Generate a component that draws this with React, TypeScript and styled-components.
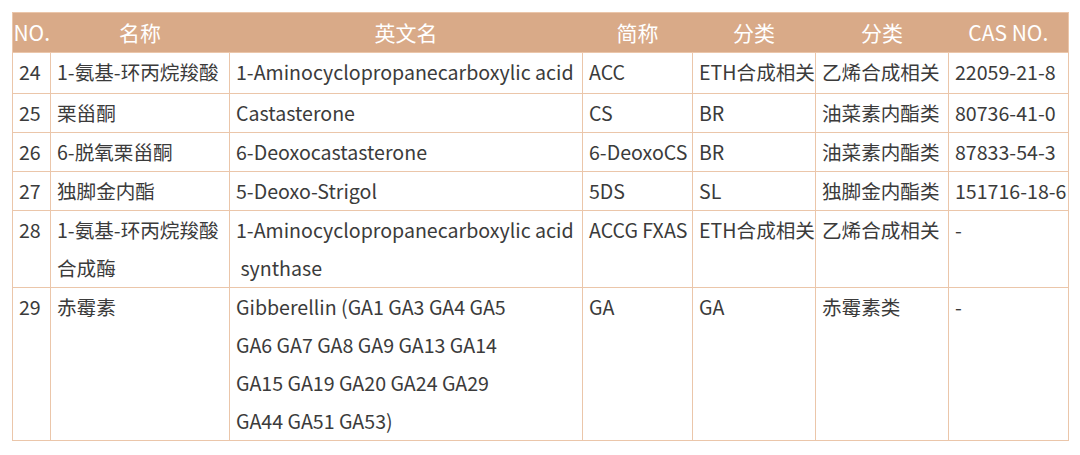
import React from 'react'
import styled, { createGlobalStyle } from 'styled-components'

const GlobalStyle = createGlobalStyle`
  html, body {
    margin: 0;
    padding: 0;
    background: #fff;
  }
  body {
    font-family: "Noto Sans CJK SC", "Noto Sans", sans-serif;
  }
`

const Wrap = styled.div`
  padding: 12px;
  background: #fff;
`

const Table = styled.table`
  width: 1056px;
  table-layout: fixed;
  border-collapse: collapse;
  border: 1.5px solid #ebc6aa;
  font-size: 19.6px;
  color: #3b3b3b;
`

const HeadRow = styled.tr`
  background: #d9aa88;
  height: 39px;
`

const Th = styled.th`
  font-weight: 400;
  color: #fff;
  font-size: 21px;
  text-align: center;
  padding: 0;
  line-height: 39px;
  white-space: nowrap;
`

const Td = styled.td<{ $extra?: number }>`
  border: 1.5px solid #ebc6aa;
  vertical-align: top;
  padding: 0 0 ${(p) => p.$extra ?? 0}px 6px;
  line-height: 38px;
  white-space: nowrap;
  overflow: visible;
`

interface Row {
  no: string
  name: React.ReactNode
  en: React.ReactNode
  abbr: string
  cat1: string
  cat2: string
  cas: string
}

const rows: Row[] = [
  { no: '24', name: '1-氨基-环丙烷羧酸', en: '1-Aminocyclopropanecarboxylic acid', abbr: 'ACC', cat1: 'ETH合成相关', cat2: '乙烯合成相关', cas: '22059-21-8' },
  { no: '25', name: '栗甾酮', en: 'Castasterone', abbr: 'CS', cat1: 'BR', cat2: '油菜素内酯类', cas: '80736-41-0' },
  { no: '26', name: '6-脱氧栗甾酮', en: '6-Deoxocastasterone', abbr: '6-DeoxoCS', cat1: 'BR', cat2: '油菜素内酯类', cas: '87833-54-3' },
  { no: '27', name: '独脚金内酯', en: '5-Deoxo-Strigol', abbr: '5DS', cat1: 'SL', cat2: '独脚金内酯类', cas: '151716-18-6' },
  {
    no: '28',
    name: <>1-氨基-环丙烷羧酸<br />合成酶</>,
    en: <>1-Aminocyclopropanecarboxylic acid<br />&nbsp;synthase</>,
    abbr: 'ACCG FXAS',
    cat1: 'ETH合成相关',
    cat2: '乙烯合成相关',
    cas: '-',
  },
  {
    no: '29',
    name: '赤霉素',
    en: <>Gibberellin (GA1 GA3 GA4 GA5<br />GA6 GA7 GA8 GA9 GA13 GA14<br />GA15 GA19 GA20 GA24 GA29<br />GA44 GA51 GA53)</>,
    abbr: 'GA',
    cat1: 'GA',
    cat2: '赤霉素类',
    cas: '-',
  },
]

export default function App() {
  return (
    <Wrap>
      <GlobalStyle />
      <Table>
        <colgroup>
          <col style={{ width: 38 }} />
          <col style={{ width: 179 }} />
          <col style={{ width: 353 }} />
          <col style={{ width: 110 }} />
          <col style={{ width: 123 }} />
          <col style={{ width: 133 }} />
          <col style={{ width: 120 }} />
        </colgroup>
        <thead>
          <HeadRow>
            <Th>NO.</Th>
            <Th>名称</Th>
            <Th>英文名</Th>
            <Th>简称</Th>
            <Th>分类</Th>
            <Th>分类</Th>
            <Th>CAS NO.</Th>
          </HeadRow>
        </thead>
        <tbody>
          {rows.map((r, i) => {
            const extra = i === 0 ? 2 : 0
            return (
              <tr key={r.no}>
                <Td $extra={extra}>{r.no}</Td>
                <Td $extra={extra}>{r.name}</Td>
                <Td $extra={extra}>{r.en}</Td>
                <Td $extra={extra}>{r.abbr}</Td>
                <Td $extra={extra}>{r.cat1}</Td>
                <Td $extra={extra}>{r.cat2}</Td>
                <Td $extra={extra}>{r.cas}</Td>
              </tr>
            )
          })}
        </tbody>
      </Table>
    </Wrap>
  )
}
